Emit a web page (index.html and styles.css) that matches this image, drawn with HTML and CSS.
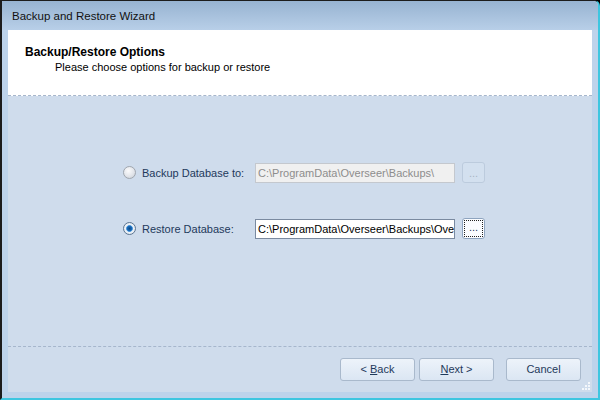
FILE: index.html
```html
<!DOCTYPE html>
<html>
<head>
<meta charset="utf-8">
<link rel="stylesheet" href="styles.css">
</head>
<body>
<div class="window">
  <div class="titlebar">Backup and Restore Wizard</div>
  <div class="client">
    <div class="header">
      <div class="h-title">Backup/Restore Options</div>
      <div class="h-sub">Please choose options for backup or restore</div>
    </div>
    <div class="main">
      <div class="row">
        <span class="radio"></span>
        <span class="label">Backup Database to:</span>
        <span class="textbox disabled">C:\ProgramData\Overseer\Backups\</span>
        <span class="browse disabled">...</span>
      </div>
      <div class="row">
        <span class="radio checked"></span>
        <span class="label">Restore Database:</span>
        <span class="textbox">C:\ProgramData\Overseer\Backups\Ove</span>
        <span class="browse focused"><span class="focus">...</span></span>
      </div>
    </div>
    <div class="footer">
      <span class="btn">&lt; <u>B</u>ack</span>
      <span class="btn"><u>N</u>ext &gt;</span>
      <span class="btn cancel">Cancel</span>
      <span class="grip"></span>
    </div>
  </div>
</div>
</body>
</html>
```

FILE: styles.css
```css
* { box-sizing: border-box; }
html, body { margin: 0; padding: 0; }
body {
  font-family: "Liberation Sans", Arial, sans-serif;
  font-size: 11px;
  width: 600px;
  height: 400px;
  overflow: hidden;
  background: #000;
}
.window {
  width: 600px;
  height: 400px;
  border-top: 1px solid #1c1c1c;
  border-left: 2px solid #1c1c1c;
  border-right: 2px solid #3ec6e0;
  border-bottom: 2px solid #3ec6e0;
  border-top-right-radius: 6px;
  background: #bdd3eb;
  display: flex;
  flex-direction: column;
}
.titlebar {
  height: 29px;
  padding-left: 10px;
  line-height: 30px;
  font-size: 11.5px;
  color: #111;
  background: linear-gradient(#97b3d1, #b8cfe8);
  border-top-right-radius: 5px;
}
.client {
  flex: 1;
  padding: 0 6px 6px 6px;
  display: flex;
  flex-direction: column;
}
.header {
  height: 66px;
  background: #fff;
  border-bottom: 1px dashed #a6b6cc;
  padding: 15px 0 0 17px;
  color: #000;
}
.h-title {
  font-weight: bold;
  font-size: 12px;
  line-height: 14px;
}
.h-sub {
  padding-left: 30px;
  line-height: 14px;
  margin-top: 1px;
}
.main {
  flex: 1;
  background: #cfdcec;
  border-bottom: 1px dashed #a6b6cc;
  padding: 66px 0 0 115px;
  display: flex;
  flex-direction: column;
  gap: 35px;
}
.row {
  display: flex;
  align-items: center;
  height: 21px;
}
.radio {
  width: 13px;
  height: 13px;
  border-radius: 50%;
  border: 1px solid #a0a6ae;
  background: radial-gradient(circle at 40% 35%, #fbfbfc 0%, #e2e5ea 55%, #c6cbd3 100%);
  margin-right: 6px;
  flex: none;
}
.radio.checked {
  border-color: #5c7591;
  background: radial-gradient(circle, #0c4a86 0%, #1a6ab8 30%, #5aa0e0 40%, #eef3f8 48%, #d9e0e8 100%);
}
.label {
  width: 113px;
  color: #1e395b;
  flex: none;
}
.textbox {
  width: 200px;
  height: 20px;
  border: 1px solid #7a8aa0;
  background: #fff;
  color: #000;
  line-height: 18px;
  padding-left: 2px;
  white-space: nowrap;
  overflow: hidden;
  flex: none;
}
.textbox.disabled {
  border-color: #c4c8ce;
  background: #f0f0f0;
  color: #8d8d8d;
}
.browse {
  margin-left: 7px;
  width: 23px;
  height: 21px;
  border: 1px solid #9fb0c6;
  border-radius: 3px;
  background: linear-gradient(#eef4fb, #dbe6f3);
  color: #1e395b;
  text-align: center;
  font-size: 11px;
  display: flex;
  align-items: center;
  justify-content: center;
  flex: none;
}
.browse.disabled {
  border-color: #bccbdd;
  background: #d3e0ef;
  color: #a8b4c4;
}
.browse.focused {
  background: #fafcff;
  border-color: #8ea4bf;
}
.focus {
  width: 19px;
  height: 17px;
  border: 1px dotted #222;
  line-height: 13px;
  display: block;
}
.footer {
  height: 45px;
  background: #cfdcec;
  padding: 11px 11px 0 0;
  display: flex;
  justify-content: flex-end;
  align-items: flex-start;
  gap: 4px;
  position: relative;
}
.btn {
  width: 75px;
  height: 23px;
  border: 1px solid #a9b9cc;
  border-radius: 3px;
  background: linear-gradient(#edf3fa, #dbe6f3);
  color: #1e395b;
  text-align: center;
  line-height: 21px;
}
.btn.cancel { margin-left: 8px; }
.grip {
  position: absolute;
  right: 2px;
  bottom: 2px;
  width: 8px;
  height: 8px;
  background:
    radial-gradient(circle, #f4f7fb 0 1px, transparent 1.2px) 6px 0/2px 2px no-repeat,
    radial-gradient(circle, #f4f7fb 0 1px, transparent 1.2px) 3px 3px/2px 2px no-repeat,
    radial-gradient(circle, #f4f7fb 0 1px, transparent 1.2px) 6px 3px/2px 2px no-repeat,
    radial-gradient(circle, #f4f7fb 0 1px, transparent 1.2px) 0 6px/2px 2px no-repeat,
    radial-gradient(circle, #f4f7fb 0 1px, transparent 1.2px) 3px 6px/2px 2px no-repeat,
    radial-gradient(circle, #f4f7fb 0 1px, transparent 1.2px) 6px 6px/2px 2px no-repeat;
}
```
